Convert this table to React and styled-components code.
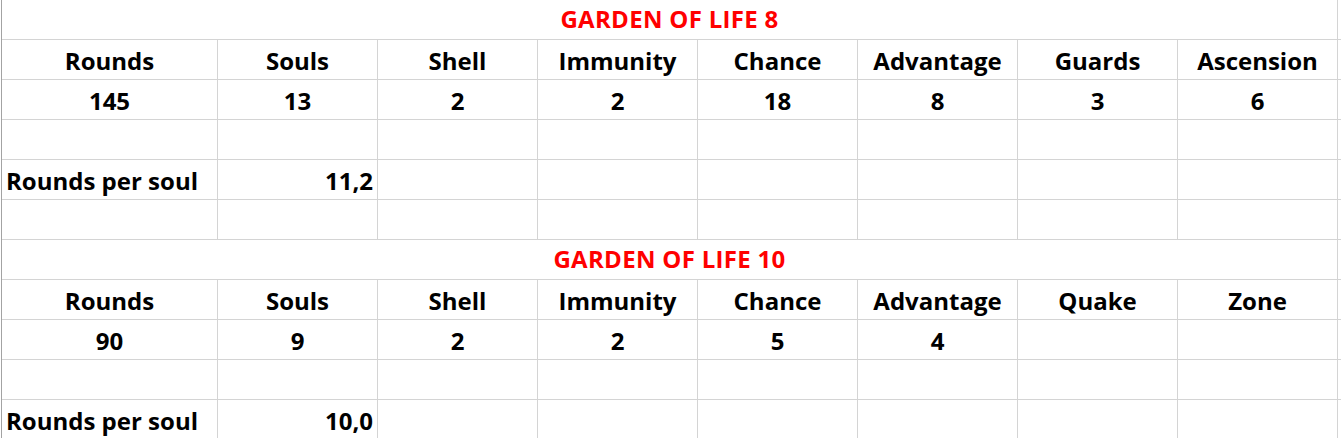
import React from 'react';
import styled, { createGlobalStyle } from 'styled-components';

const GlobalStyle = createGlobalStyle`
  body {
    margin: 0;
    background: white;
    font-family: "Open Sans", "Noto Sans", sans-serif;
  }
`;

const Page = styled.div`
  padding-left: 1px;
  width: 1341px;
  height: 438px;
  overflow: hidden;
  box-sizing: border-box;
`;

const Sheet = styled.div`
  border-left: 1px solid #a3a3a3;
`;

const Row = styled.div`
  display: grid;
  grid-template-columns: 216px repeat(7, 160px) 3px;
  height: 40px;
  box-sizing: border-box;
  border-bottom: 1px solid #d4d4d4;
`;

const TitleRow = styled.div`
  display: grid;
  grid-template-columns: 1336px 3px;
  height: 40px;
  box-sizing: border-box;
  border-bottom: 1px solid #d4d4d4;
`;

const Cell = styled.div`
  display: flex;
  align-items: flex-end;
  justify-content: ${p => (p.$align === 'right' ? 'flex-end' : p.$align === 'left' ? 'flex-start' : 'center')};
  padding: 0 4px 6px 4px;
  box-sizing: border-box;
  border-right: 1px solid #d4d4d4;
  font-size: 24px;
  line-height: 24px;
  font-weight: 700;
  color: #000;
  white-space: nowrap;
  overflow: visible;
`;

const Edge = styled.div``;

const Title = styled(Cell)`
  color: #ff0000;
  font-size: 24px;
  line-height: 24px;
  padding-bottom: 8px;
  letter-spacing: 0.3px;
`;

const sections = [
  {
    title: 'GARDEN OF LIFE 8',
    heads: ['Rounds', 'Souls', 'Shell', 'Immunity', 'Chance', 'Advantage', 'Guards', 'Ascension'],
    values: ['145', '13', '2', '2', '18', '8', '3', '6'],
    ratio: '11,2',
  },
  {
    title: 'GARDEN OF LIFE 10',
    heads: ['Rounds', 'Souls', 'Shell', 'Immunity', 'Chance', 'Advantage', 'Quake', 'Zone'],
    values: ['90', '9', '2', '2', '5', '4', '', ''],
    ratio: '10,0',
  },
];

const empty = ['', '', '', '', '', '', '', ''];

function DataRow({ cells, align }) {
  return (
    <Row>
      {cells.map((c, i) => (
        <Cell key={i} $align={align ? align[i] : 'center'}>{c}</Cell>
      ))}
      <Edge />
    </Row>
  );
}

function Section({ data, last }) {
  const ratioCells = ['Rounds per soul', data.ratio, '', '', '', '', '', ''];
  return (
    <>
      <TitleRow>
        <Title>{data.title}</Title>
        <Edge />
      </TitleRow>
      <DataRow cells={data.heads} />
      <DataRow cells={data.values} />
      <DataRow cells={empty} />
      <DataRow cells={ratioCells} align={['left', 'right']} />
      {!last && <DataRow cells={empty} />}
    </>
  );
}

export default function App() {
  return (
    <Page>
      <GlobalStyle />
      <Sheet>
        {sections.map((s, i) => (
          <Section key={i} data={s} last={i === sections.length - 1} />
        ))}
      </Sheet>
    </Page>
  );
}
